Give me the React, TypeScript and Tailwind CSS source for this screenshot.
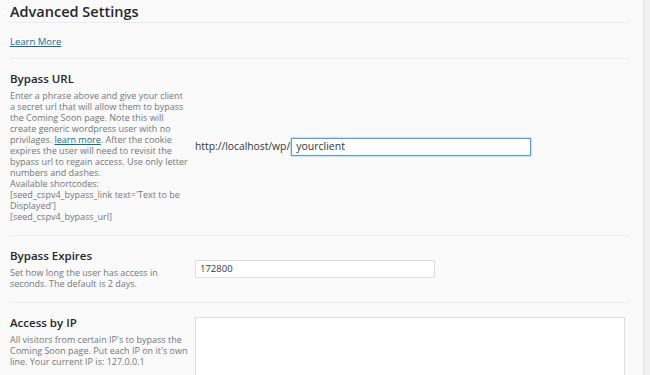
import React from 'react'

const font = { fontFamily: '"Open Sans", "Noto Sans", sans-serif' }

function Row({ title, children, field, fieldClass = '' }: { title: string; children: React.ReactNode; field: React.ReactNode; fieldClass?: string }) {
  return (
    <div className="flex border-b border-[#ececec] mx-[10px] w-[619px]">
      <div className="w-[185px] shrink-0 pt-[12px] pb-[13px]">
        <h3 className="text-[11.5px] font-semibold text-[#23282d] leading-[16px]">{title}</h3>
        <div className="mt-[3px] w-[179px] text-[9px] leading-[11px] text-[#72777c]">{children}</div>
      </div>
      <div className={`flex-1 ${fieldClass}`}>{field}</div>
    </div>
  )
}

export default function App() {
  return (
    <div className="w-[650px] h-[375px] overflow-hidden flex bg-[#fafafa]" style={font}>
      <div className="flex-1 pt-[3px]">
        <h2 className="mx-[10px] w-[619px] text-[14.5px] font-semibold text-[#23282d] leading-[18px] pb-[1px] border-b border-[#ececec]">
          Advanced Settings
        </h2>
        <div className="mx-[10px] w-[619px] pt-[12px] pb-[9px] text-[9.5px] leading-[14px] border-b border-[#ececec]">
          <a href="#" className="text-[#0073aa] underline">Learn More</a>
        </div>

        <Row
          title="Bypass URL"
          fieldClass="flex items-start pt-[79px]"
          field={
            <div className="flex items-center">
              <span className="text-[10.3px] text-[#32373c] mr-[1px]">http://localhost/wp/</span>
              <div className="w-[240px] h-[18px] bg-white border border-[#5b9dd9] shadow-[0_0_2px_rgba(30,140,190,0.6)] flex items-center px-[4px] text-[10.5px] text-[#32373c]">
                yourclient
              </div>
            </div>
          }
        >
          Enter a phrase above and give your client a secret url that will allow them to bypass the Coming Soon page. Note this will create generic wordpress user with no privilages.{' '}
          <a href="#" className="text-[#0073aa] underline">learn more</a>. After the cookie expires the user will need to revisit the bypass url to regain access. Use only letter numbers and dashes.
          <br />
          Available shortcodes:
          <br />
          [seed_cspv4_bypass_link text='Text to be Displayed']
          <br />
          [seed_cspv4_bypass_url]
        </Row>

        <Row
          title="Bypass Expires"
          fieldClass="pt-[24px]"
          field={
            <div className="w-[240px] h-[18px] bg-white border border-[#dddddd] flex items-center px-[4px] text-[9.5px] text-[#32373c]">
              172800
            </div>
          }
        >
          Set how long the user has access in seconds. The default is 2 days.
        </Row>

        <Row
          title="Access by IP"
          fieldClass="pt-[14px]"
          field={<div className="w-[430px] h-[80px] bg-white border border-[#dddddd]" />}
        >
          All visitors from certain IP's to bypass the Coming Soon page. Put each IP on it's own line. Your current IP is: 127.0.0.1
        </Row>
      </div>
      <div className="w-[7px] shrink-0 bg-[#f1f1f1] border-l border-[#e2e2e2]" />
    </div>
  )
}
